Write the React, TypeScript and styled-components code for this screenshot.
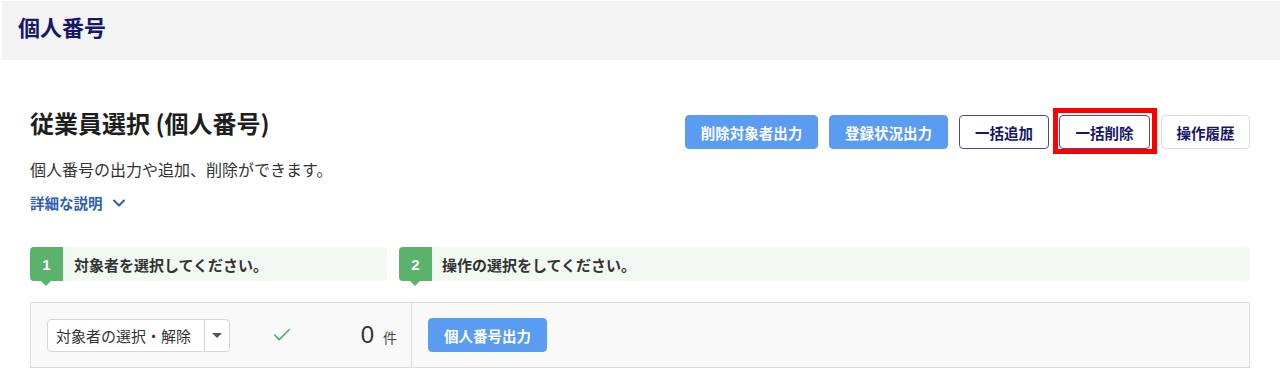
import styled, { createGlobalStyle } from "styled-components";
import { Check, ChevronDown } from "lucide-react";

const GlobalStyle = createGlobalStyle`
  body {
    margin: 0;
    background: #fff;
    font-family: "Noto Sans CJK JP", "Noto Sans", sans-serif;
    color: #333;
  }
  * {
    box-sizing: border-box;
  }
`;

const Header = styled.header`
  display: flex;
  align-items: center;
  height: 59px;
  margin: 1px 0 0 2px;
  padding: 0 0 10px 16px;
  background: #f3f3f3;
`;
const HeaderTitle = styled.h1`
  margin: 0;
  font-size: 22px;
  font-weight: bold;
  color: #16166a;
  line-height: 30px;
`;

const Main = styled.main`
  padding: 48px 30px 0;
`;

const TopRow = styled.div`
  display: flex;
  justify-content: space-between;
  align-items: flex-start;
`;
const TitleBlock = styled.div`
  display: flex;
  flex-direction: column;
`;
const SectionTitle = styled.h2`
  margin: 0;
  font-size: 24px;
  line-height: 30px;
  font-weight: bold;
  color: #1e1e1e;
`;
const Description = styled.p`
  margin: 20px 0 0;
  font-size: 16px;
  line-height: 22px;
  color: #333;
`;
const DetailLink = styled.a`
  display: flex;
  align-items: center;
  gap: 6px;
  margin-top: 13px;
  font-size: 14.5px;
  line-height: 20px;
  font-weight: bold;
  color: #2d60b0;
  cursor: pointer;
`;

const ButtonGroup = styled.div`
  display: flex;
  align-items: flex-start;
  gap: 11px;
  margin-top: 7px;
`;
const Button = styled.button<{ $variant: "primary" | "outline" | "ghost"; $w: number }>`
  all: unset;
  display: flex;
  align-items: center;
  justify-content: center;
  width: ${(p) => p.$w}px;
  height: 34px;
  border-radius: 4px;
  font-family: "Noto Sans CJK JP", sans-serif;
  font-size: 14.5px;
  font-weight: bold;
  cursor: pointer;
  box-sizing: border-box;
  background: ${(p) => (p.$variant === "primary" ? "#5a9cf1" : "#fff")};
  color: ${(p) => (p.$variant === "primary" ? "#fff" : "#16166a")};
  border: 1px solid
    ${(p) =>
      p.$variant === "primary" ? "#5a9cf1" : p.$variant === "outline" ? "#4a4a8f" : "#dcdcdc"};
`;
const Highlight = styled.span`
  display: flex;
  margin: -7px -7px -5px -7px;
  padding: 2px 2px 0 1px;
  border: 5px solid #ff0000;
`;

const Steps = styled.div`
  display: grid;
  grid-template-columns: 357px 1fr;
  gap: 12px;
  margin-top: 34px;
`;
const Step = styled.div`
  display: flex;
  align-items: center;
  height: 34px;
  border-radius: 4px;
  background: #f2f9f3;
`;
const Badge = styled.span`
  position: relative;
  display: flex;
  align-items: center;
  justify-content: center;
  width: 33px;
  height: 34px;
  border-radius: 4px 0 0 4px;
  background: #5bb26b;
  color: #fff;
  font-family: "Liberation Sans", Arial, sans-serif;
  font-size: 15px;
  font-weight: bold;
  &::after {
    content: "";
    position: absolute;
    left: 11px;
    bottom: -5px;
    border-left: 5px solid transparent;
    border-right: 5px solid transparent;
    border-top: 5px solid #5bb26b;
  }
`;
const StepText = styled.span<{ $indent: number }>`
  margin-left: ${(p) => p.$indent}px;
  font-size: 15px;
  font-weight: bold;
  color: #333;
`;

const Table = styled.div`
  display: flex;
  height: 66px;
  margin-top: 21px;
  border: 1px solid #dcdcdc;
  background: #f9f9f9;
`;
const LeftCell = styled.div`
  display: flex;
  align-items: center;
  width: 381px;
  padding: 0 14px 0 16px;
  border-right: 1px solid #dcdcdc;
`;
const RightCell = styled.div`
  display: flex;
  align-items: center;
  padding-left: 16px;
`;
const Select = styled.div`
  display: flex;
  width: 183px;
  height: 33px;
  border: 1px solid #d6d6d6;
  border-radius: 4px;
  background: #fff;
`;
const SelectLabel = styled.span`
  display: flex;
  align-items: center;
  flex: 1;
  padding-left: 8px;
  font-size: 15px;
  color: #333;
  border-right: 1px solid #d6d6d6;
`;
const Caret = styled.span`
  display: flex;
  align-items: center;
  justify-content: center;
  width: 24px;
  &::before {
    content: "";
    border-left: 5px solid transparent;
    border-right: 5px solid transparent;
    border-top: 5px solid #555;
  }
`;
const CheckMark = styled.span`
  display: flex;
  margin-left: 41px;
  color: #4bb065;
`;
const Count = styled.span`
  display: flex;
  align-items: baseline;
  gap: 9px;
  margin-left: auto;
  font-family: "Liberation Sans", Arial, sans-serif;
  font-size: 24px;
  color: #333;
`;
const Unit = styled.span`
  font-family: "Noto Sans CJK JP", sans-serif;
  font-size: 14px;
  color: #444;
`;

export default function App() {
  return (
    <>
      <GlobalStyle />
      <Header>
        <HeaderTitle>個人番号</HeaderTitle>
      </Header>
      <Main>
        <TopRow>
          <TitleBlock>
            <SectionTitle>従業員選択 (個人番号)</SectionTitle>
            <Description>個人番号の出力や追加、削除ができます。</Description>
            <DetailLink>
              詳細な説明
              <ChevronDown size={20} strokeWidth={2.5} />
            </DetailLink>
          </TitleBlock>
          <ButtonGroup>
            <Button $variant="primary" $w={133}>
              削除対象者出力
            </Button>
            <Button $variant="primary" $w={119}>
              登録状況出力
            </Button>
            <Button $variant="outline" $w={90}>
              一括追加
            </Button>
            <Highlight>
              <Button $variant="outline" $w={91}>
                一括削除
              </Button>
            </Highlight>
            <Button $variant="ghost" $w={89}>
              操作履歴
            </Button>
          </ButtonGroup>
        </TopRow>
        <Steps>
          <Step>
            <Badge>1</Badge>
            <StepText $indent={11}>対象者を選択してください。</StepText>
          </Step>
          <Step>
            <Badge>2</Badge>
            <StepText $indent={10}>操作の選択をしてください。</StepText>
          </Step>
        </Steps>
        <Table>
          <LeftCell>
            <Select>
              <SelectLabel>対象者の選択・解除</SelectLabel>
              <Caret />
            </Select>
            <CheckMark>
              <Check size={22} strokeWidth={1.75} />
            </CheckMark>
            <Count>
              0<Unit>件</Unit>
            </Count>
          </LeftCell>
          <RightCell>
            <Button $variant="primary" $w={119}>
              個人番号出力
            </Button>
          </RightCell>
        </Table>
      </Main>
    </>
  );
}
